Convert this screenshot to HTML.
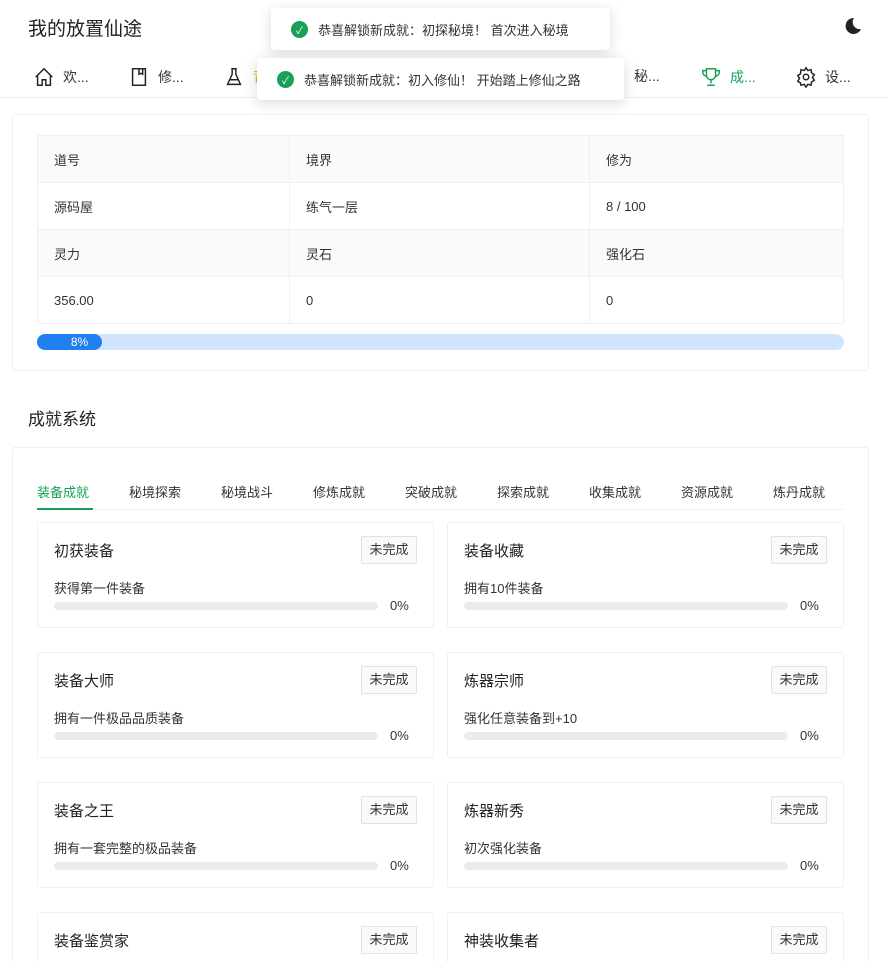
<!DOCTYPE html>
<html style="overflow:hidden;height:962px"><head><meta charset="utf-8"><style>
*{box-sizing:border-box;margin:0;padding:0}
body{width:888px;height:962px;overflow:hidden;background:#fff;font-family:"Liberation Sans","Noto Sans CJK SC",sans-serif;color:#333;font-size:14px;position:relative}
.title{position:absolute;left:28px;top:14px;font-size:19px;color:#222}
.moon{position:absolute;left:842px;top:16px}
.nav{position:absolute;left:0;top:58px;width:888px;height:40px;border-bottom:1px solid #eee}
.nav .it{position:absolute;top:8px;display:flex;align-items:center;gap:8px;font-size:14px;color:#333}
.nav svg{width:22px;height:22px}
.toast{position:absolute;background:#fff;border-radius:3px;box-shadow:0 3px 14px rgba(0,0,0,.15);display:flex;align-items:center;padding:0 20px;height:42px;font-size:13px;color:#333;gap:10px}
.ok{width:17px;height:17px;border-radius:50%;background:#18a058;color:#fff;font-size:10px;display:flex;align-items:center;justify-content:center}
.card{position:absolute;left:12px;width:857px;border:1px solid #efeff5;border-radius:3px;background:#fff}
table{position:absolute;left:24px;top:20px;width:807px;border-collapse:collapse;font-size:13px}
td{border:1px solid #efeff5;height:47px;padding-left:16px;color:#333}
tr.h td{background:#fafafc}
.pb{position:absolute;left:24px;top:219px;width:807px;height:16px;background:#d0e5fb;border-radius:8px}
.pb div{width:65px;height:16px;background:#2080f0;border-radius:8px;color:#fff;font-size:12px;text-align:center;line-height:16px;padding-left:20px}
.sec{position:absolute;left:28px;top:405px;font-size:17px;color:#222}
.tabs{position:absolute;left:24px;top:32px;width:807px;height:30px;border-bottom:1px solid #efeff5}
.tabs span{position:absolute;top:2px;font-size:13px;color:#333}
.tabs .a{color:#18a058}
.ul{position:absolute;left:0;bottom:-1px;width:56px;height:2px;background:#18a058}
.ac{position:absolute;width:397px;height:106px;border:1px solid #efeff5;border-radius:3px}
.ac .n{position:absolute;left:16px;top:17px;font-size:15px;color:#222}
.ac .b{position:absolute;right:16px;top:13px;width:56px;height:28px;border:1px solid #e0e0e6;background:#fafafc;border-radius:2px;font-size:13px;text-align:center;line-height:26px;color:#333}
.ac .d{position:absolute;left:16px;top:55px;font-size:13px;color:#333}
.ac .bar{position:absolute;left:16px;top:79px;width:324px;height:8px;border-radius:4px;background:#ebebeb}
.ac .p{position:absolute;left:352px;top:75px;font-size:13px;color:#333}
</style></head><body>
<div class="title">我的放置仙途</div>
<svg class="moon" width="20" height="20" viewBox="0 0 20 20"><path d="M12 2a8 8 0 1 0 7 11A7 7 0 0 1 12 2z" fill="#222"/></svg>
<div class="nav">
<div class="it" style="left:33px"><svg viewBox="0 0 24 24" fill="none" stroke="#222" stroke-width="1.6"><path d="M3 12L12 3l9 9M5 10v11h5v-6h4v6h5V10"/></svg>欢...</div>
<div class="it" style="left:128px"><svg viewBox="0 0 24 24" fill="none" stroke="#222" stroke-width="1.6"><rect x="5" y="3" width="14" height="18"/><path d="M12 3v6l2-1 2 1V3"/></svg>修...</div>
<div class="it" style="left:223px"><svg viewBox="0 0 24 24" fill="none" stroke="#222" stroke-width="1.6"><path d="M9 3h6M10 3v6L5 20h14L14 9V3M7 15h10"/></svg><span style="color:#f0a020">背...</span></div>
<div class="it" style="left:634px">秘...</div>
<div class="it" style="left:700px;color:#18a058"><svg viewBox="0 0 24 24" fill="none" stroke="#18a058" stroke-width="1.6"><path d="M7 3h10v7a5 5 0 0 1-10 0zM7 5H3v2a4 4 0 0 0 4 4M17 5h4v2a4 4 0 0 1-4 4M12 15v4M8 21h8"/></svg>成...</div>
<div class="it" style="left:795px"><svg viewBox="0 0 24 24" fill="none" stroke="#222" stroke-width="1.6"><circle cx="12" cy="12" r="3"/><path d="M12 2l2 3 3.5-1 .5 3.5 3 2-2 3 2 3-3 2-.5 3.5-3.5-1-2 3-2-3-3.5 1L6 18.5l-3-2 2-3-2-3 3-2L6.5 4 10 5z"/></svg>设...</div>
</div>
<div class="toast" style="left:271px;top:8px;width:339px"><span class="ok">✓</span>恭喜解锁新成就：初探秘境！ 首次进入秘境</div>
<div class="toast" style="left:257px;top:58px;width:367px"><span class="ok">✓</span>恭喜解锁新成就：初入修仙！ 开始踏上修仙之路</div>

<div class="card" style="top:114px;height:257px">
<table>
<tr class="h"><td style="width:252px">道号</td><td style="width:300px">境界</td><td>修为</td></tr>
<tr><td>源码屋</td><td>练气一层</td><td>8 / 100</td></tr>
<tr class="h"><td>灵力</td><td>灵石</td><td>强化石</td></tr>
<tr><td>356.00</td><td>0</td><td>0</td></tr>
</table>
<div class="pb"><div>8%</div></div>
</div>
<div class="sec">成就系统</div>
<div class="card" style="top:447px;height:515px;overflow:hidden;border-bottom:none">
<div class="tabs"><span class="a" style="left:0">装备成就</span><span style="left:92px">秘境探索</span><span style="left:184px">秘境战斗</span><span style="left:276px">修炼成就</span><span style="left:368px">突破成就</span><span style="left:460px">探索成就</span><span style="left:552px">收集成就</span><span style="left:644px">资源成就</span><span style="left:736px">炼丹成就</span><div class="ul"></div></div>
<div class="ac" style="left:24px;top:74px"><div class="n">初获装备</div><div class="b">未完成</div><div class="d">获得第一件装备</div><div class="bar"></div><div class="p">0%</div></div>
<div class="ac" style="left:434px;top:74px"><div class="n">装备收藏</div><div class="b">未完成</div><div class="d">拥有10件装备</div><div class="bar"></div><div class="p">0%</div></div>
<div class="ac" style="left:24px;top:204px"><div class="n">装备大师</div><div class="b">未完成</div><div class="d">拥有一件极品品质装备</div><div class="bar"></div><div class="p">0%</div></div>
<div class="ac" style="left:434px;top:204px"><div class="n">炼器宗师</div><div class="b">未完成</div><div class="d">强化任意装备到+10</div><div class="bar"></div><div class="p">0%</div></div>
<div class="ac" style="left:24px;top:334px"><div class="n">装备之王</div><div class="b">未完成</div><div class="d">拥有一套完整的极品装备</div><div class="bar"></div><div class="p">0%</div></div>
<div class="ac" style="left:434px;top:334px"><div class="n">炼器新秀</div><div class="b">未完成</div><div class="d">初次强化装备</div><div class="bar"></div><div class="p">0%</div></div>
<div class="ac" style="left:24px;top:464px;height:60px"><div class="n">装备鉴赏家</div><div class="b">未完成</div></div>
<div class="ac" style="left:434px;top:464px;height:60px"><div class="n">神装收集者</div><div class="b">未完成</div></div>
</div>
</body></html>
